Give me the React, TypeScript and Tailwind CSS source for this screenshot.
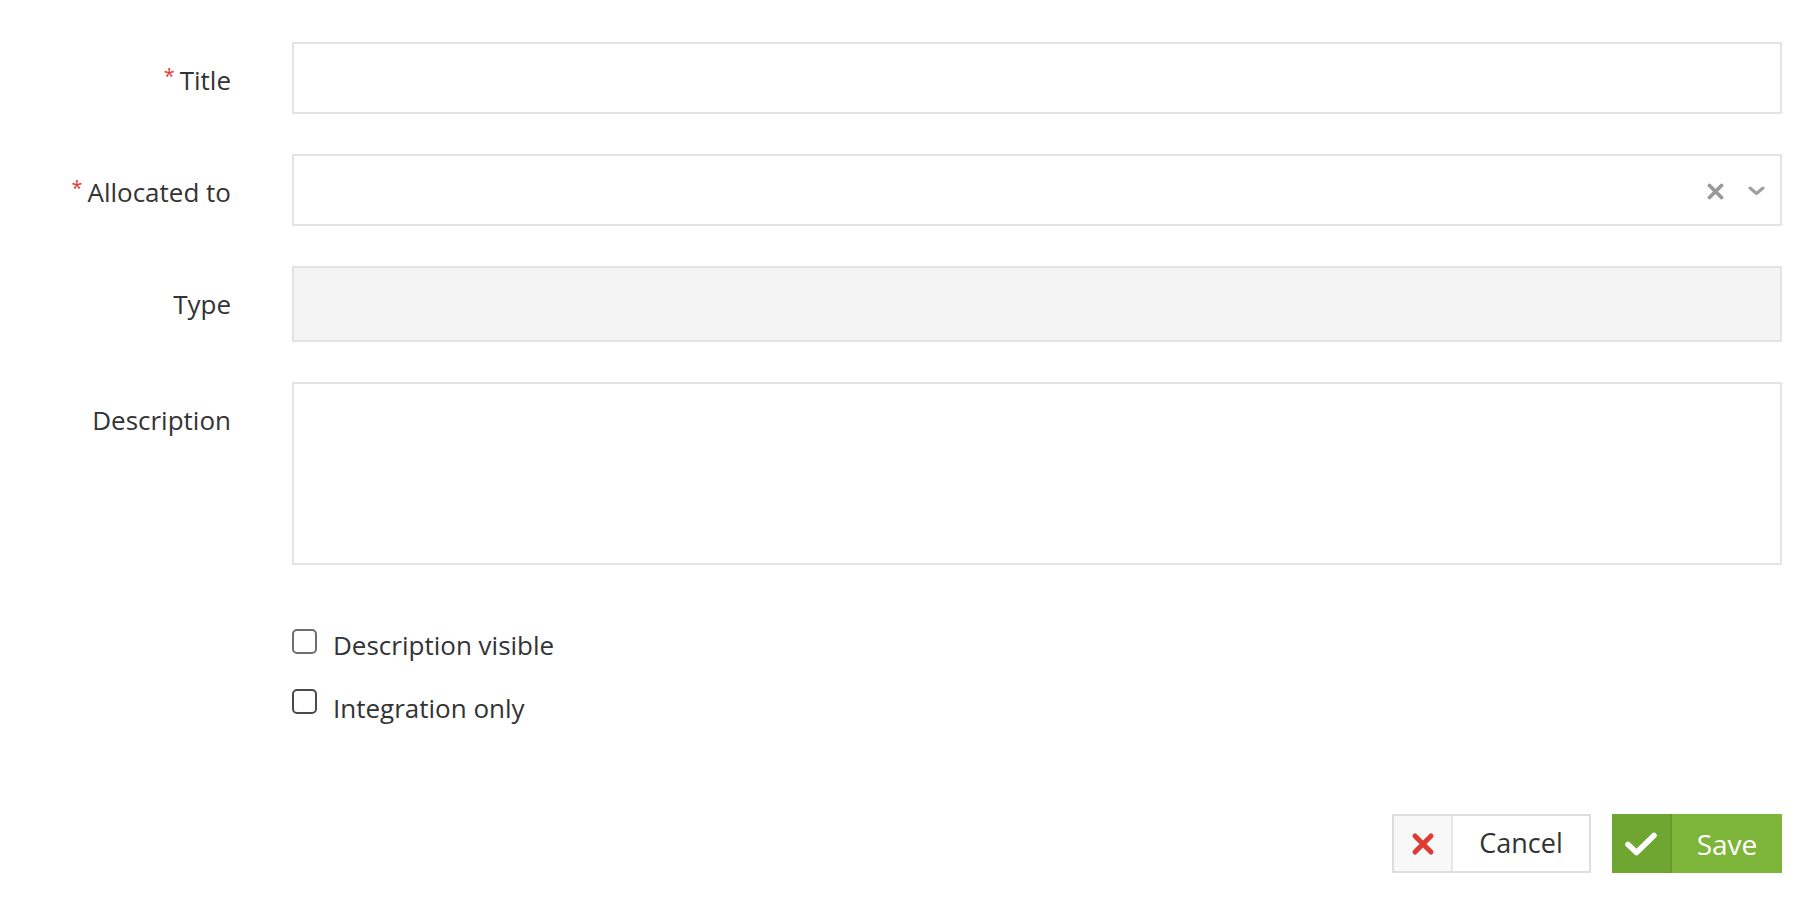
import { useState } from 'react';

function Label({ text, required }: { text: string; required?: boolean }) {
  return (
    <div className="w-[231px] shrink-0 text-right leading-[72px] h-[72px]">
      <span className="relative top-[2px]">
        {required && <span className="text-[#e53935] text-[20px] align-top relative top-[-4px] mr-[5px]">*</span>}
        {text}
      </span>
    </div>
  );
}

function Checkbox({ label, dark }: { label: string; dark?: boolean }) {
  const [checked, setChecked] = useState(false);
  return (
    <label className="flex items-center gap-[16px] cursor-pointer select-none">
      <span
        onClick={() => setChecked(!checked)}
        className={`w-[25px] h-[25px] rounded-[5px] border-2 bg-white ${dark ? 'border-[#4a4a4a] -mt-[14px]' : 'border-[#6e6e6e] -mt-[8px]'}`}
      />
      <span>{label}</span>
    </label>
  );
}

export default function App() {
  return (
    <div className="w-[1818px] h-[898px] bg-white text-[#333] text-[26px] font-['Open_Sans',sans-serif] pt-[42px] pr-[36px]">
      <div className="flex flex-col gap-[40px]">
        <div className="flex gap-[61px]">
          <Label text="Title" required />
          <input className="w-[1490px] h-[72px] border-2 border-[#e3e3e3] bg-white outline-none px-4" />
        </div>

        <div className="flex gap-[61px]">
          <Label text="Allocated to" required />
          <div className="w-[1490px] h-[72px] border-2 border-[#e3e3e3] bg-white flex items-center justify-end pr-[15px] gap-[24px]">
            <svg width="17" height="17" viewBox="0 0 17 17" className="mt-[2px]">
              <path d="M2.5 2.5 L14.5 14.5 M14.5 2.5 L2.5 14.5" stroke="#999" strokeWidth="3.8" strokeLinecap="round" />
            </svg>
            <svg width="17" height="10" viewBox="0 0 17 10" className="mt-[1px]">
              <path d="M2 2 L8.5 7.5 L15 2" stroke="#9e9e9e" strokeWidth="3" fill="none" strokeLinecap="round" strokeLinejoin="round" />
            </svg>
          </div>
        </div>

        <div className="flex gap-[61px]">
          <Label text="Type" />
          <div className="w-[1490px] h-[76px] border-2 border-[#e3e3e3] bg-[#f3f3f3]" />
        </div>

        <div className="flex gap-[61px]">
          <Label text="Description" />
          <textarea className="w-[1490px] h-[183px] border-2 border-[#e3e3e3] bg-white outline-none resize-none p-4" />
        </div>
      </div>

      <div className="ml-[292px] mt-[68px] flex flex-col gap-[38px] leading-[25px]">
        <Checkbox label="Description visible" />
        <Checkbox label="Integration only" dark />
      </div>

      <div className="flex justify-end gap-[21px] mt-[93px] text-[27px]">
        <button className="flex h-[59px] w-[199px] border-2 border-[#dedede] bg-white">
          <span className="w-[59px] h-full bg-[#f8f8f8] border-r-2 border-[#e6e6e6] flex items-center justify-center">
            <svg width="24" height="24" viewBox="0 0 24 24">
              <path d="M4 4 L20 20 M20 4 L4 20" stroke="#e03a33" strokeWidth="5" strokeLinecap="round" />
            </svg>
          </span>
          <span className="flex-1 flex items-center justify-center text-[#333]">Cancel</span>
        </button>
        <button className="flex h-[59px] w-[170px] bg-[#7cb53a] text-white">
          <span className="w-[60px] h-full bg-[#6fa632] border-r-2 border-[#67992d] flex items-center justify-center">
            <svg width="34" height="26" viewBox="0 0 34 26">
              <path d="M4 13.5 L12.5 21.5 L30 4.5" stroke="#fff" strokeWidth="5.5" fill="none" strokeLinecap="round" strokeLinejoin="round" />
            </svg>
          </span>
          <span className="flex-1 flex items-center justify-center text-[28px]">Save</span>
        </button>
      </div>
    </div>
  );
}
